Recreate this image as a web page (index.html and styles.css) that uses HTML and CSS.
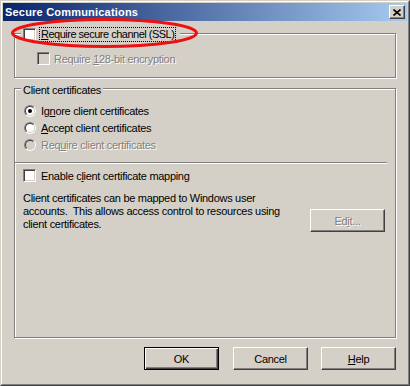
FILE: index.html
```html
<!DOCTYPE html>
<html lang="en">
<head>
    <meta charset="UTF-8">
    <title>Secure Communications</title>
    <link rel="stylesheet" href="styles.css">
</head>
<body>
    <div class="window">
        <div class="frame">
            <div class="titlebar">
                <span class="title">Secure Communications</span>
                <span class="close">
                    <svg width="8" height="7" viewBox="0 0 8 7"><path d="M0.5 0.5 L7.5 6.5 M7.5 0.5 L0.5 6.5" stroke="#000" stroke-width="1.6" fill="none"/></svg>
                </span>
            </div>

            <div class="content">
                <div class="group ssl">
                    <div class="legend">
                        <span class="check"></span>
                        <span class="label focus"><u>R</u>equire secure channel (SSL)</span>
                    </div>
                    <div class="row sub disabled">
                        <span class="check off"></span>
                        <span class="label">Require <u>1</u>28-bit encryption</span>
                    </div>
                </div>

                <div class="group client">
                    <div class="legend text">Client certificates</div>
                    <div class="row opt">
                        <span class="radio"><i><b class="dot"></b></i></span>
                        <span class="label">Ig<u>n</u>ore client certificates</span>
                    </div>
                    <div class="row opt">
                        <span class="radio"><i></i></span>
                        <span class="label"><u>A</u>ccept client certificates</span>
                    </div>
                    <div class="row opt disabled">
                        <span class="radio off"><i></i></span>
                        <span class="label">Req<u>u</u>ire client certificates</span>
                    </div>
                    <div class="sep"></div>
                    <div class="row map">
                        <span class="check"></span>
                        <span class="label">Enable c<u>l</u>ient certificate mapping</span>
                    </div>
                    <div class="mapping">
                        <p>Client certificates can be mapped to Windows user<br>accounts.&nbsp; This allows access control to resources using<br>client certificates.</p>
                        <button class="btn edit" disabled>Ed<u>i</u>t...</button>
                    </div>
                </div>

                <div class="buttons">
                    <button class="btn default">OK</button>
                    <button class="btn cancel">Cancel</button>
                    <button class="btn help"><u>H</u>elp</button>
                </div>
            </div>
        </div>

        <svg class="mark" width="410" height="386" viewBox="0 0 410 386">
            <ellipse cx="104.5" cy="33" rx="92" ry="13.5" fill="none" stroke="#ee1111" stroke-width="3"/>
        </svg>
    </div>
</body>
</html>
```
FILE: styles.css
```css
body {
    margin: 0;
    font-family: "Liberation Sans", Arial, sans-serif;
    font-size: 11px;
    letter-spacing: -0.3px;
    color: #000;
    background: #d4d0c8;
}
.window {
    position: relative;
    width: 410px;
    height: 386px;
    box-sizing: border-box;
    border: 1px solid;
    border-color: #d4d0c8 #404040 #404040 #d4d0c8;
    background: #d4d0c8;
}
.frame {
    height: 100%;
    box-sizing: border-box;
    border: 1px solid;
    border-color: #fff #808080 #808080 #fff;
    padding: 1px;
}
.titlebar {
    height: 18px;
    display: flex;
    align-items: center;
    padding: 0 2px;
    background: linear-gradient(to right, #0a246a, #a6caf0);
}
.title {
    flex: 1;
    color: #fff;
    font-weight: bold;
    letter-spacing: 0.2px;
}
.close {
    width: 16px;
    height: 14px;
    box-sizing: border-box;
    display: flex;
    align-items: center;
    justify-content: center;
    border: 1px solid;
    border-color: #fff #404040 #404040 #fff;
    box-shadow: inset -1px -1px 0 #808080;
    background: #d4d0c8;
}
.content {
    padding: 12px 0 0 11px;
}
.group {
    width: 382px;
    box-sizing: border-box;
    border: 1px solid #808080;
    box-shadow: inset 1px 1px 0 #fff, 1px 1px 0 #fff;
}
.ssl {
    padding-bottom: 12px;
}
.client {
    height: 250px;
    margin-top: 10px;
}
.legend {
    display: flex;
    align-items: center;
    width: fit-content;
    height: 15px;
    margin: -7px 0 0 6px;
    padding: 0 4px 0 2px;
    background: #d4d0c8;
}
.legend.text {
    height: 13px;
    margin-top: -6px;
    padding: 0 2px;
}
.row {
    display: flex;
    align-items: center;
    height: 13px;
}
.label {
    margin-left: 5px;
    white-space: nowrap;
}
.focus {
    margin-left: 3px;
    padding: 0 1px;
    line-height: 13px;
    letter-spacing: -0.5px;
    border: 1px dotted #000;
}
.sub {
    margin: 10px 0 0 22px;
}
.sub .label {
    margin-left: 4px;
}
.disabled .label {
    color: #808080;
    text-shadow: 1px 1px 0 #fff;
}
.check {
    flex: none;
    width: 13px;
    height: 13px;
    box-sizing: border-box;
    border: 1px solid;
    border-color: #808080 #fff #fff #808080;
    background: #fff;
    box-shadow: inset 1px 1px 0 #404040, inset -1px -1px 0 #d4d0c8;
}
.check.off {
    background: #d4d0c8;
}
.opt {
    margin-left: 9px;
    margin-top: 4px;
}
.legend + .opt {
    margin-top: 8px;
}
.radio {
    flex: none;
    display: flex;
    width: 12px;
    height: 12px;
    box-sizing: border-box;
    border-radius: 50%;
    border: 1px solid;
    border-color: #808080 #fff #fff #808080;
}
.radio i {
    flex: 1;
    display: flex;
    align-items: center;
    justify-content: center;
    border-radius: 50%;
    border: 1px solid;
    border-color: #404040 #d4d0c8 #d4d0c8 #404040;
    background: #fff;
}
.radio.off i {
    background: #d4d0c8;
}
.dot {
    width: 4px;
    height: 4px;
    border-radius: 50%;
    background: #000;
}
.sep {
    width: 372px;
    margin-top: 11px;
    border-top: 1px solid #808080;
    border-bottom: 1px solid #fff;
}
.map {
    margin: 5px 0 0 8px;
}
.mapping {
    display: flex;
    align-items: flex-start;
}
.mapping p {
    margin: 10px 0 0 8px;
    line-height: 13px;
    white-space: nowrap;
}
.btn {
    width: 75px;
    height: 23px;
    box-sizing: border-box;
    padding: 0;
    font-family: inherit;
    font-size: 11px;
    letter-spacing: -0.3px;
    color: #000;
    background: #d4d0c8;
    border: 1px solid;
    border-color: #fff #404040 #404040 #fff;
    box-shadow: inset -1px -1px 0 #808080;
}
.btn.edit {
    margin: 27px 10px 0 auto;
    color: #808080;
    text-shadow: 1px 1px 0 #fff;
}
.btn.default {
    border-color: #000;
    box-shadow: inset 1px 1px 0 #fff, inset -1px -1px 0 #404040, inset -2px -2px 0 #808080;
}
.buttons {
    display: flex;
    justify-content: flex-end;
    width: 382px;
    margin-top: 9px;
}
.cancel {
    margin-left: 14px;
}
.help {
    margin-left: 13px;
}
.mark {
    position: absolute;
    top: -1px;
    left: -1px;
    pointer-events: none;
}
```
